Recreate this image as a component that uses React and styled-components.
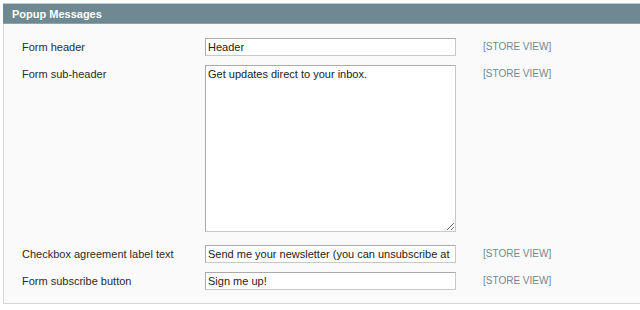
import React from "react";
import styled, { createGlobalStyle } from "styled-components";

const Global = createGlobalStyle`
  html, body { margin: 0; padding: 0; background: #ffffff; }
  body { font-family: "Liberation Sans", Arial, sans-serif; font-size: 11px; }
`;

const Section = styled.section`
  margin: 3px 0 0 3px;
  width: 650px;
`;

const Head = styled.div`
  height: 19px;
  border-top: 1px solid #c3ccd0;
  background: #6f8992;
  border-bottom: 1px solid #8fa3aa;
  display: flex;
  align-items: center;
  padding-left: 9px;
`;

const Title = styled.h4`
  margin: 0;
  color: #ffffff;
  font-weight: bold;
  font-size: 11px;
  font-family: "Liberation Sans", Arial, sans-serif;
`;

const Fieldset = styled.div`
  background: #fafafa;
  border: 1px solid #d6d6d6;
  border-top: none;
  padding: 14px 0 13px 18px;
  display: grid;
  grid-template-columns: 183px 251px auto;
  row-gap: 9px;
  align-items: start;
`;

const Label = styled.div`
  color: #2b2b2b;
  font-size: 11px;
  line-height: 18px;
`;

const Scope = styled.div`
  color: #6f8992;
  font-size: 10px;
  line-height: 18px;
  padding-left: 27px;
  text-transform: uppercase;
`;

const Input = styled.input`
  box-sizing: border-box;
  width: 251px;
  height: 18px;
  margin: 0;
  padding: 0 2px;
  border: 1px solid;
  border-color: #aaaaaa #c8c8c8 #c8c8c8 #aaaaaa;
  background: #ffffff;
  font: 11px "Liberation Sans", Arial, sans-serif;
  color: #222222;
  outline: none;
  display: block;
`;

const Area = styled.textarea`
  box-sizing: border-box;
  width: 251px;
  height: 167px;
  margin: 0 0 4px 0;
  padding: 2px 2px;
  border: 1px solid;
  border-color: #aaaaaa #c8c8c8 #c8c8c8 #aaaaaa;
  background: #ffffff;
  font: 11px "Liberation Sans", Arial, sans-serif;
  color: #222222;
  outline: none;
  display: block;
`;

const rows = [
  { label: "Form header", value: "Header" },
  { label: "Form sub-header", value: "Get updates direct to your inbox.", area: true },
  { label: "Checkbox agreement label text", value: "Send me your newsletter (you can unsubscribe at any time)" },
  { label: "Form subscribe button", value: "Sign me up!" },
];

export default function App() {
  return (
    <>
      <Global />
      <Section>
        <Head>
          <Title>Popup Messages</Title>
        </Head>
        <Fieldset>
          {rows.map((r) => (
            <React.Fragment key={r.label}>
              <Label>{r.label}</Label>
              {r.area ? (
                <Area defaultValue={r.value} />
              ) : (
                <Input defaultValue={r.value} />
              )}
              <Scope>[Store View]</Scope>
            </React.Fragment>
          ))}
        </Fieldset>
      </Section>
    </>
  );
}
